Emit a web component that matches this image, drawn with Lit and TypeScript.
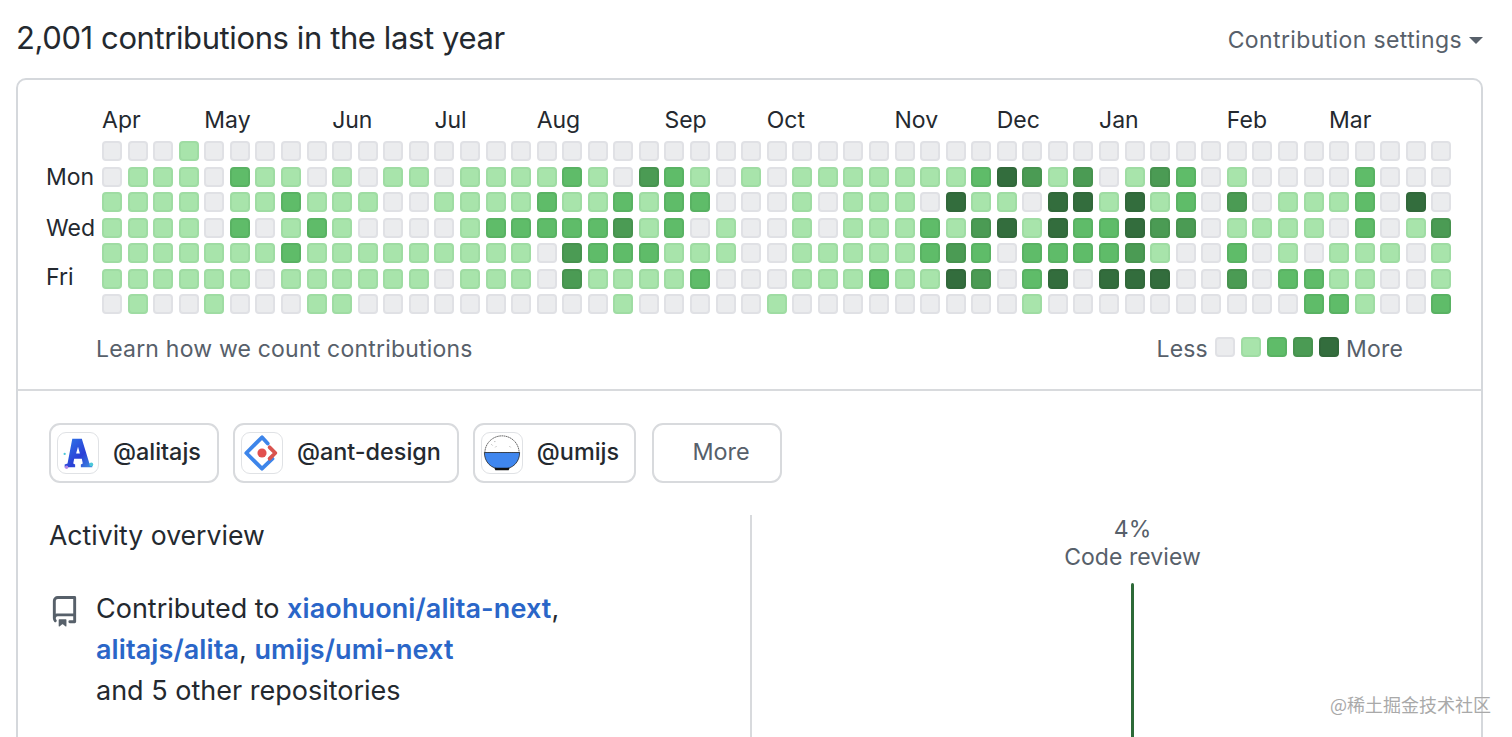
import { LitElement, html, css } from "lit";
import { customElement } from "lit/decorators.js";

const WEEKS: number[][] = (() => {
  const r0 = new Array(53).fill(0); r0[3] = 1;
  const r1 = [0,1,1,1,0,2,1,1,0,1,0,1,1,0,1,1, 1,1,2,1,0,3,2,1,0,1,0,1,1,1,1,1,1,1,2,4, 3,1,3,0,1,3,2,0,1,0,0,0,0,2,0,0,0];
  const r2 = [1,1,1,1,0,1,1,2,1,1,1,0,0,1,1,1, 1,2,1,1,2,1,2,2,0,0,0,1,0,1,1,1,0,4,1,1, 0,4,4,1,4,1,2,0,3,0,1,1,1,2,0,4,0];
  const r3 = [1,1,1,1,0,2,0,1,2,1,0,0,0,0,1,2, 2,2,2,2,3,1,2,0,1,0,0,1,0,1,1,1,2,1,3,4, 1,4,2,2,4,3,3,0,1,1,1,1,0,2,0,1,3];
  const r4 = [1,1,1,1,1,1,1,2,1,1,1,1,1,1,1,1, 1,0,3,2,2,2,1,1,1,0,0,1,1,1,1,1,2,3,2,0, 2,2,2,2,3,1,0,0,2,0,1,0,1,1,1,0,1];
  const r5 = [1,1,1,1,1,1,0,1,1,1,1,1,1,0,1,1, 1,0,3,1,1,1,1,2,0,0,0,1,1,1,2,1,1,4,3,0, 2,4,0,4,4,4,0,0,3,0,2,2,1,1,0,0,1];
  const r6 = [0,1,0,0,1,0,0,0,1,1,0,0,0,0,0,0, 0,0,0,0,1,0,0,0,0,0,1,0,0,0,0,0,0,0,0,0, 1,0,0,0,0,0,0,0,0,0,0,2,2,1,0,0,2];
  return [r0, r1, r2, r3, r4, r5, r6];
})();

const MONTHS: [string, number][] = [
  ["Apr", 0], ["May", 4], ["Jun", 9], ["Jul", 13], ["Aug", 17], ["Sep", 22],
  ["Oct", 26], ["Nov", 31], ["Dec", 35], ["Jan", 39], ["Feb", 44], ["Mar", 48],
];

@customElement("app-root")
export class AppRoot extends LitElement {
  static styles = css`
    :host {
      display: block;
      width: 1512px;
      height: 737px;
      overflow: hidden;
      background: #fff;
      position: relative;
      font-family: Inter, "Liberation Sans", sans-serif;
      color: #24292f;
      box-sizing: border-box;
      padding: 0 29px 0 16px;
    }
    .head {
      display: flex;
      justify-content: space-between;
      align-items: center;
      height: 76px;
      margin-bottom: 2px;
    }
    h2 { margin: -2px 0 0; font-size: 31px; font-weight: 400; letter-spacing: -0.4px; }
    .settings { font-size: 23px; letter-spacing: 0.38px; color: #57606a; display: flex; align-items: center; gap: 7px; margin: 4px 0 0; }
    .caret { width: 0; height: 0; border: 7.500px solid transparent; border-top-color: #57606a; border-bottom: 0; }
    .card {
      border: 2px solid #d5d8dc;
      border-radius: 10px;
      height: 800px;
      box-sizing: border-box;
    }
    .cal { height: 311px; border-bottom: 2px solid #d8dadd; box-sizing: border-box; padding: 26px 0 0 28px; }
    .months, .weeks {
      display: grid;
      grid-template-columns: 50.500px repeat(53, 20px);
      column-gap: 5.565px;
    }
    .months { font-size: 23px; line-height: 28px; height: 35px; }
    .months span { white-space: nowrap; grid-row: 1; }
    .weeks { grid-template-rows: repeat(7, 20px); row-gap: 5.55px; }
    .day { grid-column: 1; font-size: 23px; line-height: 20px; white-space: nowrap; }
    .fri { margin-top: -2px; }
    .cell { border-radius: 4px; box-sizing: border-box; border: 2px solid; }
    .l0 { background: #ebecee; border-color: #e0e1e5; }
    .l1 { background: #a8e4ab; border-color: #9fdca3; }
    .l2 { background: #5fbc69; border-color: #59b263; }
    .l3 { background: #4b9b54; border-color: #47934f; }
    .l4 { background: #336d3d; border-color: #31683a; }
    .foot {
      display: flex;
      justify-content: space-between;
      margin: 21px 78px 0 50px;
      font-size: 23px;
      letter-spacing: 0.2px;
      color: #57606a;
    }
    .legend { display: flex; align-items: center; gap: 7px; }
    .swatches { display: flex; gap: 6px; margin-top: -4px; }
    .legend .cell { width: 20px; height: 20px; display: block; }
    .body { padding: 32px 31px 0 31px; }
    .orgs { display: flex; gap: 14px; height: 60px; }
    .org {
      display: flex;
      align-items: center;
      gap: 14px;
      height: 60px;
      box-sizing: border-box;
      border: 2px solid #d8dadd;
      border-radius: 11px;
      padding: 0 15px 0 6px;
      font-size: 23.400px;
      font-weight: 500;
      color: #24292f;
    }
    .org span { margin-top: -3px; }
    .logo { width: 42px; height: 42px; border-radius: 9px; border: 1px solid #e0e2e5; box-sizing: border-box; flex: none; }
    .more {
      width: 130px;
      margin-left: 2px;
      justify-content: center;
      padding: 0 0 0 8px;
      font-weight: 400;
      color: #57606a;
    }
    .split { display: grid; grid-template-columns: 703px 1fr; margin-top: 32px; height: 300px; }
    .left { border-right: 2px solid #d8dadd; }
    h3 { margin: 4px 0 0 0; font-size: 26.600px; font-weight: 400; line-height: 32px; }
    .contrib { display: flex; gap: 16px; margin-top: 37px; font-size: 27px; line-height: 41px; }
    .contrib svg { flex: none; margin-top: 8px; }
    a { color: #2a66c8; font-weight: 600; text-decoration: none; letter-spacing: 0.1px; }
    .right { display: flex; flex-direction: column; align-items: center; font-size: 23px; letter-spacing: 0.05px; color: #57606a; line-height: 28px; position: relative; padding-left: 63px; }
    .bar { width: 3px; height: 200px; background: #2d6a38; border-radius: 2px; margin-top: 12px; }
    .seventy { position: absolute; left: 113px; top: 216px; font-size: 22px; }
    .wm {
      position: absolute;
      right: 21px;
      top: 693px;
      font-family: "Noto Sans CJK SC", sans-serif;
      font-size: 18px;
      line-height: 22px;
      color: #a9a9a9;
    }
  `;

  render() {
    return html`
      <div class="head">
        <h2>2,001 contributions in the last year</h2>
        <div class="settings">Contribution settings <span class="caret"></span></div>
      </div>
      <section class="card">
        <div class="cal">
          <div class="months">
            ${MONTHS.map(([m, c]) => html`<span style="grid-column:${c + 2}">${m}</span>`)}
          </div>
          <div class="weeks">
            <span class="day" style="grid-row:2">Mon</span>
            <span class="day" style="grid-row:4">Wed</span>
            <span class="day fri" style="grid-row:6">Fri</span>
            ${WEEKS.map((r, y) => r.map((l, x) => html`<span class="cell l${l}" style="grid-row:${y + 1};grid-column:${x + 2}"></span>`))}
          </div>
          <div class="foot">
            <span>Learn how we count contributions</span>
            <span class="legend">Less
              <span class="swatches">${[0, 1, 2, 3, 4].map((l) => html`<span class="cell l${l}"></span>`)}</span>
              More</span>
          </div>
        </div>
        <div class="body">
          <div class="orgs">
            <div class="org" style="padding-right:16px">
              <svg class="logo" viewBox="0 0 42 42">
                <defs><linearGradient id="a" x1="0" y1="0" x2="1" y2="1"><stop offset="0" stop-color="#2f7bea"/><stop offset=".6" stop-color="#2a3fd6"/><stop offset="1" stop-color="#3f8fe0"/></linearGradient></defs>
                <path d="M15 6h10l8 26 3 1v3H24v-3l2-1-1-5h-8l-1 5 2 1v3H7v-3l3-1z" fill="url(#a)"/>
                <path d="M19 21.500l2-7 2 7z" fill="#fff"/>
                <circle cx="7" cy="22" r="1.200" fill="#4cc8d8"/>
                <circle cx="9" cy="36" r="1.800" fill="#b48ae8"/><circle cx="35" cy="33" r="2" fill="#4cc8d8"/>
              </svg>
              <span>@alitajs</span>
            </div>
            <div class="org" style="padding-right:16px">
              <svg class="logo" viewBox="0 0 42 42">
                <path d="M27 11 21 4.500 4.500 21 21 37.500 32 27" fill="none" stroke="#3d85ea" stroke-width="4" stroke-linejoin="round" stroke-linecap="round"/>
                <path d="M29 15l6 6-6 6" fill="none" stroke="#d9534f" stroke-width="4" stroke-linejoin="round" stroke-linecap="round"/>
                <circle cx="21" cy="21" r="4.800" fill="#e2504f"/>
              </svg>
              <span>@ant-design</span>
            </div>
            <div class="org" style="padding-right:15px">
              <svg class="logo" viewBox="0 0 42 42">
                <path d="M3 21C3 11 11 3 21 3s18 8 18 18z" fill="#fff" stroke="#555" stroke-width=".9" stroke-dasharray="1.800 .5"/>
                <path d="M2.500 20.500h37C39.500 30 33 38 21 38S2.500 30 2.500 20.500z" fill="#3f86ee" stroke="#222" stroke-width=".8"/>
                <path d="M13 36.500h16l-1 2.500H14z" fill="#111"/>
                <path d="M10 12l1 1M14 15l1-1M29 14l1 1M13 9h1" stroke="#888" stroke-width=".8"/>
              </svg>
              <span>@umijs</span>
            </div>
            <div class="org more"><span>More</span></div>
          </div>
          <div class="split">
            <div class="left">
              <h3>Activity overview</h3>
              <div class="contrib">
                <svg width="31" height="31" viewBox="0 0 16 16" fill="#57606a"><path fill-rule="evenodd" d="M2 2.500A2.500 2.500 0 0 1 4.500 0h8.750a.75.75 0 0 1 .75.75v12.500a.75.75 0 0 1-.75.75h-2.500a.75.75 0 0 1 0-1.500h1.750v-2h-8a1 1 0 0 0-.714 1.700.75.75 0 0 1-1.072 1.050A2.495 2.495 0 0 1 2 11.500v-9zm10.500-1V9h-8c-.356 0-.694.074-1 .208V2.500a1 1 0 0 1 1-1h8zM5 12.250v3.250a.25.25 0 0 0 .4.200l1.450-1.087a.25.25 0 0 1 .3 0L8.600 15.700a.25.25 0 0 0 .4-.2v-3.250a.25.25 0 0 0-.25-.25h-3.500a.25.25 0 0 0-.25.25z"/></svg>
                <div>Contributed to <a>xiaohuoni/alita-next</a>,<br /><a>alitajs/alita</a>, <a>umijs/umi-next</a><br />and 5 other repositories</div>
              </div>
            </div>
            <div class="right">
              <div>4%</div>
              <div>Code review</div>
              <div class="bar"></div>
              <div class="seventy">70%</div>
            </div>
          </div>
        </div>
      </section>
      <div class="wm">@稀土掘金技术社区</div>
    `;
  }
}
